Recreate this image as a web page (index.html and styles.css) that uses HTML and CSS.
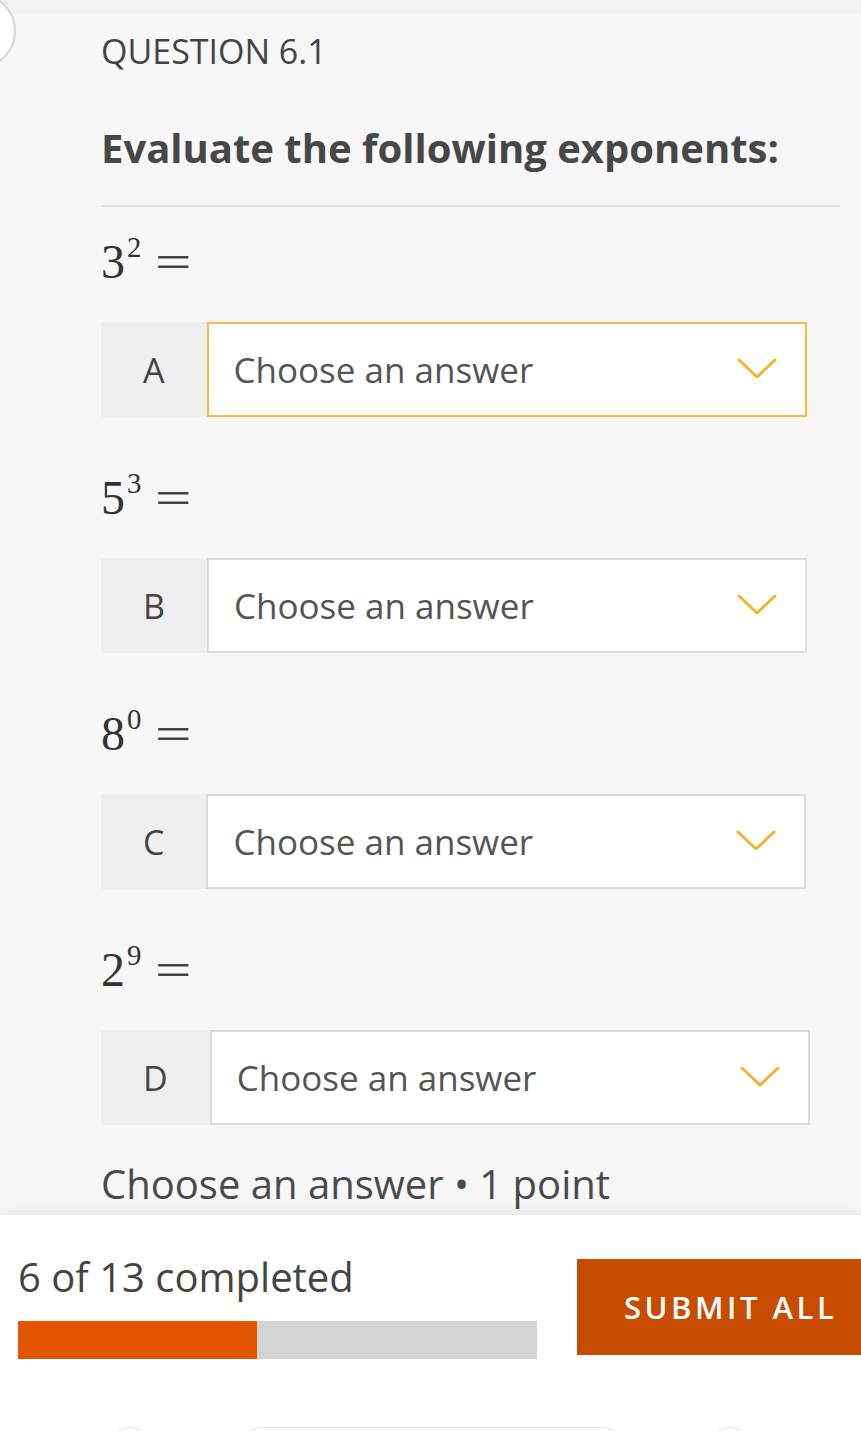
FILE: index.html
```html
<!DOCTYPE html>
<html lang="en">
<head>
<meta charset="utf-8">
<title>Question 6.1</title>
<link rel="stylesheet" href="styles.css">
</head>
<body>
<div class="page">
  <div class="top-strip"></div>
  <div class="nav-circle"></div>
  <main class="content">
    <div class="q-label">QUESTION 6.1</div>
    <h1 class="q-title">Evaluate the following exponents:</h1>
    <hr class="divider">

    <div class="item">
      <div class="math">3<span class="sup">2</span><span class="eq">=</span></div>
      <div class="row">
        <div class="letter">A</div>
        <div class="select select-active"><span>Choose an answer</span><svg class="chev" viewBox="0 0 40 22"><path d="M2 2 L20 19 L38 2" /></svg></div>
      </div>
    </div>

    <div class="item">
      <div class="math">5<span class="sup">3</span><span class="eq">=</span></div>
      <div class="row">
        <div class="letter">B</div>
        <div class="select"><span>Choose an answer</span><svg class="chev" viewBox="0 0 40 22"><path d="M2 2 L20 19 L38 2" /></svg></div>
      </div>
    </div>

    <div class="item">
      <div class="math">8<span class="sup">0</span><span class="eq">=</span></div>
      <div class="row">
        <div class="letter">C</div>
        <div class="select"><span>Choose an answer</span><svg class="chev" viewBox="0 0 40 22"><path d="M2 2 L20 19 L38 2" /></svg></div>
      </div>
    </div>

    <div class="item">
      <div class="math">2<span class="sup">9</span><span class="eq">=</span></div>
      <div class="row">
        <div class="letter">D</div>
        <div class="select"><span>Choose an answer</span><svg class="chev" viewBox="0 0 40 22"><path d="M2 2 L20 19 L38 2" /></svg></div>
      </div>
    </div>

    <div class="meta">Choose an answer • 1 point</div>
  </main>

  <footer class="footer">
    <div class="progress-col">
      <div class="progress-text">6 of 13 completed</div>
      <div class="bar"><div class="bar-fill" style="width: 46%"></div></div>
    </div>
    <button class="submit">SUBMIT ALL</button>
    <div class="bottom-nav">
      <span class="nav-shape nav-s1"></span>
      <span class="nav-shape nav-s2"></span>
      <span class="nav-shape nav-s3"></span>
    </div>
  </footer>
</div>
</body>
</html>
```

FILE: styles.css
```css
* { box-sizing: border-box; }

html, body {
  margin: 0;
  padding: 0;
  background: #f7f7f7;
  overflow: hidden;
}

body {
  font-family: "Open Sans", "Noto Sans", sans-serif;
  color: #444;
  width: 861px;
  height: 1431px;
}

.page {
  position: relative;
  width: 861px;
  height: 1431px;
  overflow: hidden;
}

.top-strip {
  height: 14px;
  background: #f2f2f2;
}

.nav-circle {
  position: absolute;
  left: -60px;
  top: -7px;
  width: 76px;
  height: 76px;
  border-radius: 50%;
  background: #fff;
  border: 2px solid #d6d6d6;
}

.content {
  padding: 0 21px 0 101px;
}

.q-label {
  margin-top: 14px;
  font-size: 34px;
  line-height: 46px;
  color: #444;
}

.q-title {
  margin: 47px 0 0;
  font-size: 40px;
  line-height: 54px;
  font-weight: 700;
  color: #474747;
}

.divider {
  margin: 30px 0 0;
  border: 0;
  border-top: 2px solid #e0e0e0;
  height: 0;
}

.item {
  margin-top: 25px;
}
.item + .item {
  margin-top: 51px;
}

.math {
  font-family: "Liberation Serif", "DejaVu Serif", serif;
  font-size: 48px;
  line-height: 60px;
  height: 60px;
  color: #333;
}

.sup {
  font-size: 0.6em;
  vertical-align: 0.72em;
  line-height: 0;
  margin-left: 2px;
}

.eq {
  display: inline-block;
  margin-left: 14px;
  transform: scaleX(1.35);
  transform-origin: left center;
  color: #444;
}

.row {
  margin-top: 30px;
  display: flex;
  height: 95px;
}

.letter {
  background: #efefef;
  padding: 0 42px;
  font-size: 34px;
  display: flex;
  align-items: center;
  justify-content: center;
  color: #444;
}

.select {
  width: 600px;
  height: 95px;
  background: #fff;
  border: 2px solid #dcdcdc;
  display: flex;
  align-items: center;
  justify-content: space-between;
  padding: 0 28px 0 25px;
  font-size: 35px;
  color: #555;
}

.select-active {
  border-color: #f3bd45;
}

.chev {
  width: 40px;
  height: 22px;
  margin-bottom: 2px;
}
.chev path {
  fill: none;
  stroke: #f1b52c;
  stroke-width: 3;
  stroke-linecap: round;
  stroke-linejoin: round;
}

.meta {
  margin-top: 34px;
  font-size: 40px;
  line-height: 50px;
  color: #4a4a4a;
}

.footer {
  position: absolute;
  left: 0;
  right: 0;
  bottom: 0;
  height: 216px;
  background: #fff;
  box-shadow: 0 -4px 14px rgba(0, 0, 0, 0.07);
  display: flex;
  align-items: flex-start;
  padding-left: 18px;
  overflow: hidden;
}

.progress-col {
  width: 519px;
  padding-top: 37px;
  flex: none;
}

.progress-text {
  font-size: 40px;
  line-height: 50px;
  color: #444;
}

.bar {
  margin-top: 19px;
  height: 38px;
  background: #d4d4d4;
}

.bar-fill {
  height: 100%;
  background: #e35500;
}

.submit {
  flex: none;
  margin: 44px 0 0 40px;
  width: 320px;
  height: 96px;
  border: 0;
  background: #c84c00;
  color: #fff;
  font-family: "Open Sans", "Noto Sans", sans-serif;
  font-weight: 600;
  font-size: 31px;
  letter-spacing: 3.5px;
  text-align: left;
  padding: 0 0 0 47px;
}

.bottom-nav {
  position: absolute;
  left: 0;
  right: 0;
  bottom: -48px;
  height: 52px;
}

.nav-shape {
  position: absolute;
  top: 0;
  height: 60px;
  border: 1px solid #e4e4e4;
  border-radius: 30px;
  background: #fcfcfc;
}
.nav-s1 { left: 105px; width: 50px; border-radius: 50%; }
.nav-s2 { left: 232px; width: 400px; }
.nav-s3 { left: 705px; width: 50px; border-radius: 50%; }
```
